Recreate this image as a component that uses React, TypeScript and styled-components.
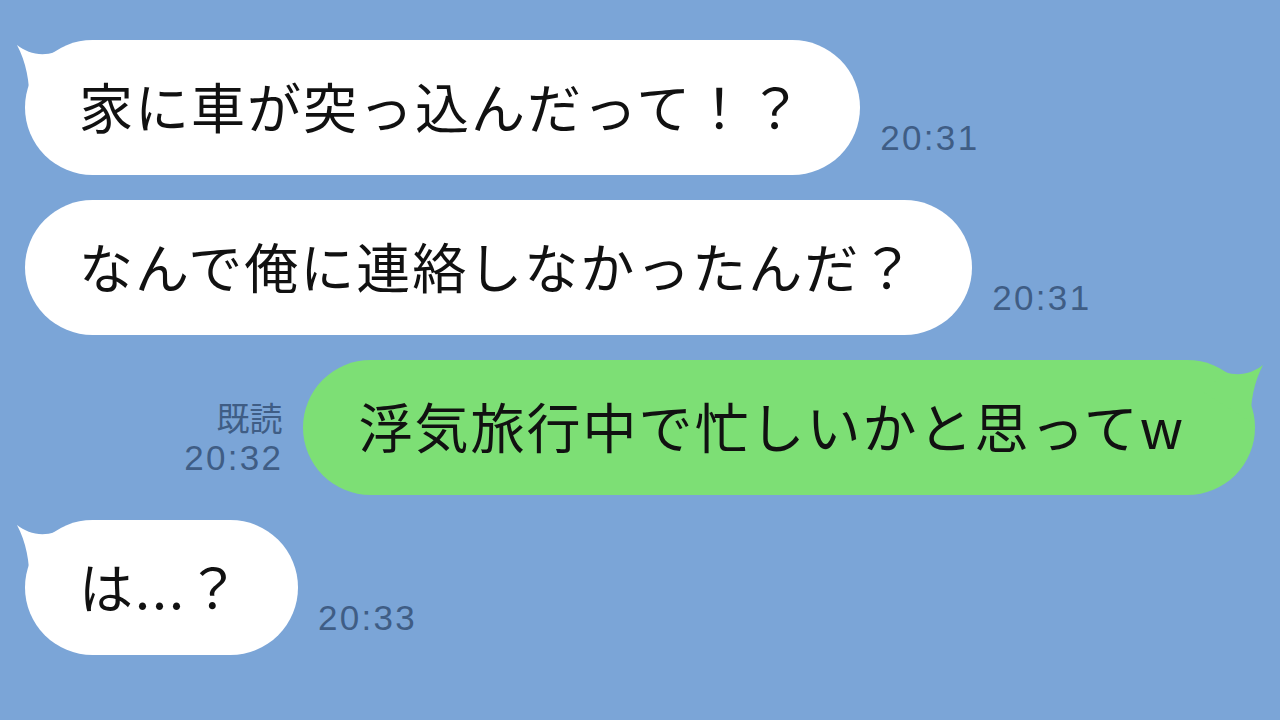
import styled, { createGlobalStyle } from "styled-components";

const GlobalStyle = createGlobalStyle`
  html, body {
    margin: 0;
    padding: 0;
    background: #7ba5d7;
  }
  body {
    font-family: "Noto Sans CJK JP", "Noto Sans", sans-serif;
  }
`

type Message = {
    text: string
    time: string
    mine?: boolean
    tail?: boolean
}

const messages: Message[] = [
    {text: "家に車が突っ込んだって！？", time: "20:31", tail: true},
    {text: "なんで俺に連絡しなかったんだ？", time: "20:31"},
    {text: "浮気旅行中で忙しいかと思ってw", time: "20:32", mine: true, tail: true},
    {text: "は...？", time: "20:33", tail: true},
]

const Tail = ({mine}: { mine?: boolean }) => (
    <TailSvg $mine={mine} width="80" height="70" viewBox="0 0 80 70">
        <path d="M2,5 C12,13 26,17 40,12 L62,32 L14,62 C15,42 11,22 2,5 Z"/>
    </TailSvg>
)

const App = () => {
    return (
        <>
            <GlobalStyle/>
            <Chat>
                {messages.map((m, i) =>
                    <Row key={i} $mine={m.mine}>
                        {m.mine &&
                            <Meta>
                                <Read>既読</Read>
                                <Time>{m.time}</Time>
                            </Meta>
                        }
                        <Bubble $mine={m.mine}>
                            {m.tail && <Tail mine={m.mine}/>}
                            <Text>{m.text}</Text>
                        </Bubble>
                        {!m.mine &&
                            <Meta>
                                <Time>{m.time}</Time>
                            </Meta>
                        }
                    </Row>
                )}
            </Chat>
        </>
    )
}

export default App


const Chat = styled.div`
  display: flex;
  flex-direction: column;
  gap: 25px;
  padding: 40px 25px 0 25px;
  width: 1280px;
  height: 720px;
  box-sizing: border-box;
  overflow: hidden;
`

const Row = styled.div<{ $mine?: boolean }>`
  display: flex;
  align-items: flex-end;
  justify-content: ${p => p.$mine ? "flex-end" : "flex-start"};
  gap: 20px;
`

const Bubble = styled.div<{ $mine?: boolean }>`
  position: relative;
  display: flex;
  align-items: center;
  height: 135px;
  box-sizing: border-box;
  padding: ${p => p.$mine ? "0 70px 0 55px" : "0 56px 0 54px"};
  border-radius: 68px;
  background: ${p => p.$mine ? "#7ddf75" : "#ffffff"};
  fill: ${p => p.$mine ? "#7ddf75" : "#ffffff"};
`

const TailSvg = styled.svg<{ $mine?: boolean }>`
  position: absolute;
  top: 0;
  ${p => p.$mine ? "right: -10px; transform: scaleX(-1);" : "left: -10px;"}
`

const Text = styled.span`
  position: relative;
  top: -2px;
  font-size: 54px;
  letter-spacing: 2px;
  line-height: 1;
  color: #111111;
  white-space: nowrap;
`

const Meta = styled.div`
  display: flex;
  flex-direction: column;
  align-items: flex-end;
  padding-bottom: 20px;
  color: #3f5d85;
`

const Read = styled.div`
  font-size: 33px;
  line-height: 1.35;
  margin-right: 1px;
`

const Time = styled.div`
  font-family: "Liberation Sans", "Noto Sans", sans-serif;
  font-size: 35px;
  letter-spacing: 2.3px;
  line-height: 1;
`
